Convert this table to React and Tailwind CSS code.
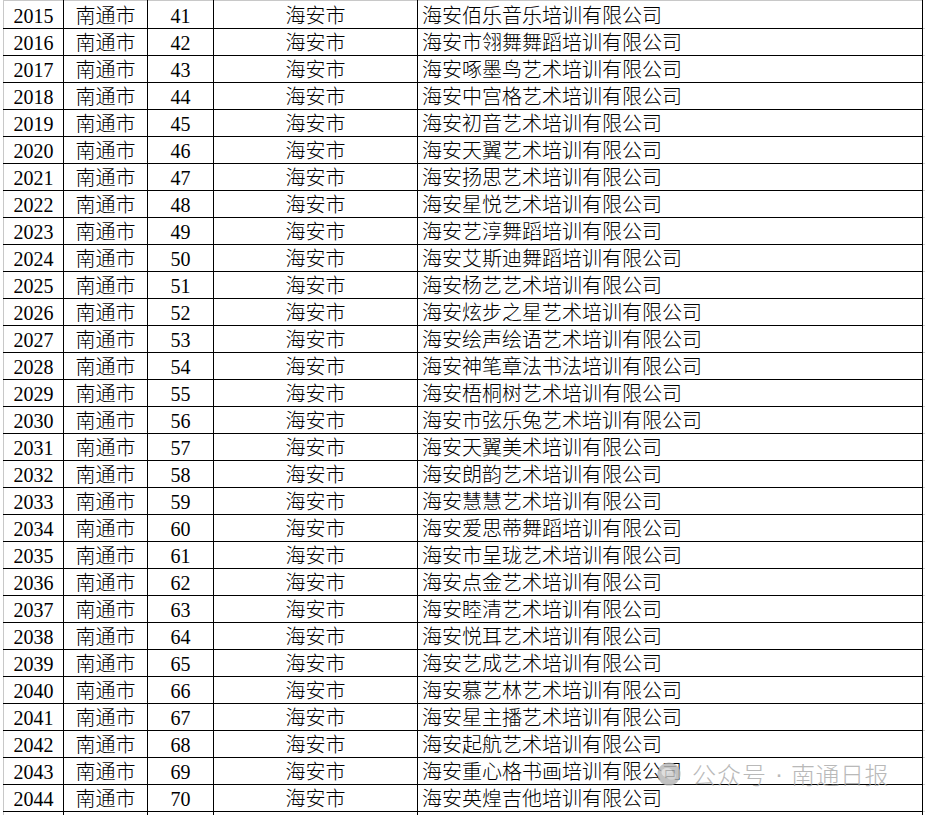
const names = [
  "海安佰乐音乐培训有限公司",
  "海安市翎舞舞蹈培训有限公司",
  "海安啄墨鸟艺术培训有限公司",
  "海安中宫格艺术培训有限公司",
  "海安初音艺术培训有限公司",
  "海安天翼艺术培训有限公司",
  "海安扬思艺术培训有限公司",
  "海安星悦艺术培训有限公司",
  "海安艺淳舞蹈培训有限公司",
  "海安艾斯迪舞蹈培训有限公司",
  "海安杨艺艺术培训有限公司",
  "海安炫步之星艺术培训有限公司",
  "海安绘声绘语艺术培训有限公司",
  "海安神笔章法书法培训有限公司",
  "海安梧桐树艺术培训有限公司",
  "海安市弦乐兔艺术培训有限公司",
  "海安天翼美术培训有限公司",
  "海安朗韵艺术培训有限公司",
  "海安慧慧艺术培训有限公司",
  "海安爱思蒂舞蹈培训有限公司",
  "海安市呈珑艺术培训有限公司",
  "海安点金艺术培训有限公司",
  "海安睦清艺术培训有限公司",
  "海安悦耳艺术培训有限公司",
  "海安艺成艺术培训有限公司",
  "海安慕艺林艺术培训有限公司",
  "海安星主播艺术培训有限公司",
  "海安起航艺术培训有限公司",
  "海安重心格书画培训有限公司",
  "海安英煌吉他培训有限公司",
];

const rows = names.map((name, i) => ({ id: 2015 + i, no: 41 + i, name }));

function Watermark() {
  return (
    <div className="absolute left-[657px] top-[762px] flex items-center text-[#a8a8a8] opacity-80 pointer-events-none font-['Noto_Sans_CJK_SC',sans-serif] text-[24px] leading-none">
      {/* wechat-ish bubble mark */}
      <svg width="24" height="24" viewBox="0 0 24 24">
        <circle cx="12" cy="12" r="11.5" fill="#b4b4b4" />
        <ellipse cx="10" cy="10.5" rx="5.5" ry="4.5" fill="#d6d6d6" />
        <ellipse cx="14.5" cy="14" rx="4.5" ry="3.8" fill="#cacaca" />
      </svg>
      <span className="ml-[11px] tracking-[1px]">公众号</span>
      <span className="w-[24px] text-center font-['Liberation_Sans',sans-serif]">·</span>
      <span className="tracking-[0.5px]">南通日报</span>
    </div>
  );
}

export default function App() {
  return (
    <div className="relative w-[925px] h-[815px] overflow-hidden bg-white pl-[3px] font-['Liberation_Serif','Noto_Sans_CJK_SC',serif] text-[20px] font-light text-black">
      <table className="table-fixed border-collapse w-[922px]">
        <colgroup>
          <col className="w-[60px]" />
          <col className="w-[84px]" />
          <col className="w-[66px]" />
          <col className="w-[204px]" />
          <col className="w-[505px]" />
          <col className="w-[3px]" />
        </colgroup>
        <tbody>
          {rows.map((r, i) => {
            const top = i === 0 ? "border-t-[#c8c8c8]" : "";
            return (
              <tr key={r.id} className={i === 0 ? "h-[28px]" : "h-[27px]"}>
                <td className={`border border-black border-l-[#c8c8c8] text-center align-bottom leading-[24px] ${top}`}>
                  {r.id}
                </td>
                <td className={`border border-black text-center align-bottom leading-[24px] ${top}`}>
                  南通市
                </td>
                <td className={`border border-black text-center align-bottom leading-[24px] ${top}`}>
                  {r.no}
                </td>
                <td className={`border border-black text-center align-bottom leading-[24px] ${top}`}>
                  海安市
                </td>
                <td className={`border border-black text-left align-bottom leading-[24px] pl-[4px] whitespace-nowrap ${top}`}>
                  {r.name}
                </td>
                <td className="border-b border-[#d4d4d4] p-0"></td>
              </tr>
            );
          })}
          <tr className="h-[27px]">
            <td className="border-x border-black border-l-[#c8c8c8]"></td>
            <td className="border-x border-black"></td>
            <td className="border-x border-black"></td>
            <td className="border-x border-black"></td>
            <td className="border-x border-black"></td>
            <td></td>
          </tr>
        </tbody>
      </table>
      <Watermark />
    </div>
  );
}
